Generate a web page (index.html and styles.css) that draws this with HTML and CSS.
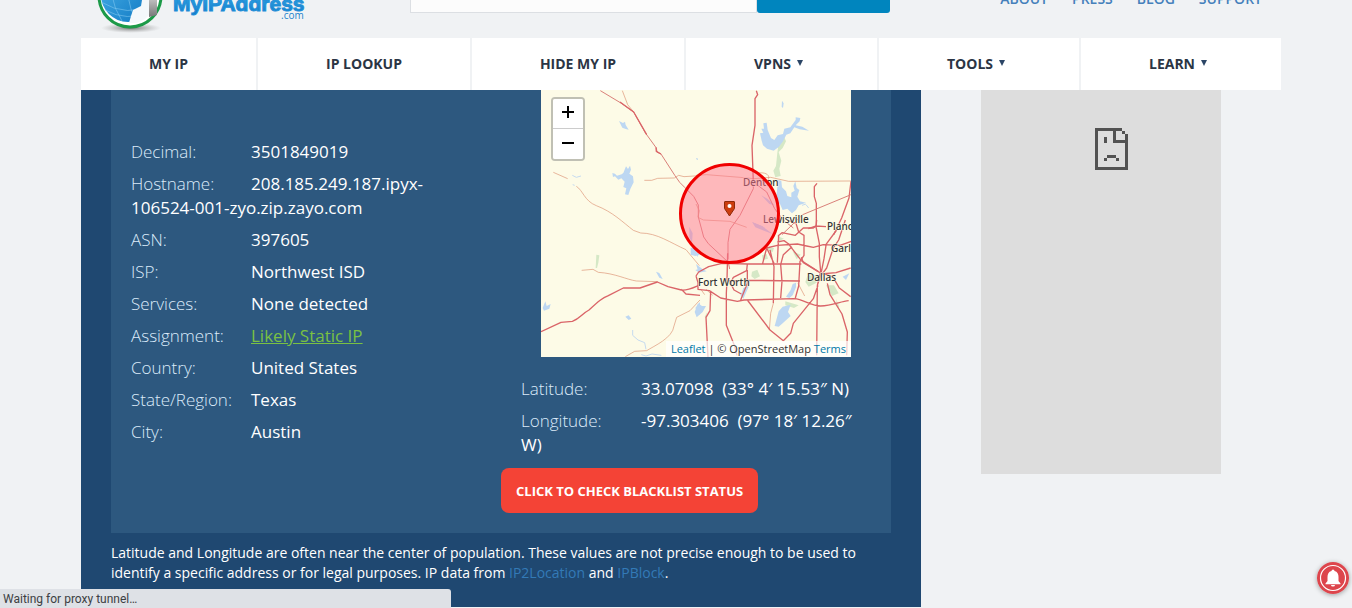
FILE: index.html
```html
<!DOCTYPE html>
<html lang="en">
<head>
<meta charset="utf-8">
<meta name="viewport" content="width=device-width, initial-scale=1">
<title>What Is My IP Address</title>
<link rel="stylesheet" href="styles.css">
</head>
<body>
<div class="page">

<header class="header">
    <a class="logo" href="#">
        <svg width="230" height="78" viewBox="0 0 230 78">
            <defs>
                <radialGradient id="shade"><stop offset="0" stop-color="#555" stop-opacity=".8"/><stop offset="1" stop-color="#999" stop-opacity="0"/></radialGradient>
                <linearGradient id="sea" x1="0" y1="0" x2="1" y2="1"><stop offset="0" stop-color="#4db4ea"/><stop offset="1" stop-color="#0b74c0"/></linearGradient>
                <linearGradient id="steel" x1="0" y1="0" x2="0" y2="1"><stop offset="0" stop-color="#eee"/><stop offset="1" stop-color="#777"/></linearGradient>
                <linearGradient id="word" x1="0" y1="0" x2="0" y2="1"><stop offset="0" stop-color="#36aee8"/><stop offset="1" stop-color="#1478c8"/></linearGradient>
            </defs>
            <ellipse cx="50" cy="68" rx="30" ry="5" fill="url(#shade)"/>
            <circle cx="49" cy="36" r="31" fill="#fff" stroke="#1c9a48" stroke-width="3"/>
            <circle cx="47" cy="35" r="27" fill="url(#sea)"/>
            <path d="M20 42q26 16 54 2M24 50q22 12 45 2M33 9q-8 27 8 52M47 8q-4 30 8 53M62 12q8 20 0 46" fill="none" stroke="#8fd0f4" stroke-width=".5"/>
            <path d="M54 30l7 10-1 6-8 4-2 6-2 7 8 0 8-4 12-12V30z" fill="#f4f8fb"/>
            <path d="M68 28h8v27l-8 2z" fill="url(#steel)"/>
            <text class="logo-name" x="92" y="51">MyIPAddress</text>
            <text class="logo-com" x="200" y="59">.com</text>
        </svg>
    </a>
    <form class="search">
        <input type="text" aria-label="IP address">
        <button type="button" aria-label="Search"></button>
    </form>
    <nav class="top-links">
        <a href="#">ABOUT</a>
        <a href="#">PRESS</a>
        <a href="#">BLOG</a>
        <a href="#">SUPPORT</a>
    </nav>
</header>

<nav class="menu">
    <a href="#">MY IP</a>
    <a href="#">IP LOOKUP</a>
    <a href="#">HIDE MY IP</a>
    <a class="has-menu" href="#">VPNS <span class="arrow"></span></a>
    <a class="has-menu" href="#">TOOLS <span class="arrow"></span></a>
    <a class="has-menu" href="#">LEARN <span class="arrow"></span></a>
</nav>

<div class="content">
    <main class="main">
        <div class="panel">
            <div class="details">
                <p><span class="label">Decimal:</span>3501849019</p>
                <p><span class="label">Hostname:</span>208.185.249.187.ipyx-106524-001-zyo.zip.zayo.com</p>
                <p><span class="label">ASN:</span>397605</p>
                <p><span class="label">ISP:</span>Northwest ISD</p>
                <p><span class="label">Services:</span>None detected</p>
                <p><span class="label">Assignment:</span><a href="#">Likely Static IP</a></p>
                <p><span class="label">Country:</span>United States</p>
                <p><span class="label">State/Region:</span>Texas</p>
                <p><span class="label">City:</span>Austin</p>
            </div>

            <div class="location">
                <div class="map">
                    <svg class="map-tiles" viewBox="0 0 310 267">
                        <g transform="scale(.33333)">
                            <!-- north west -->
                            <g transform="translate(-3 -6)">
                                <path class="water" d="M237 99l12 6 6-4 2 10 9 14-9-2-10-4zM250 255l8-20 6 8 6-10 3 12-5 12 11 8 2 18-10 20-6 18-10-2 4-18-9-4 4-16-10-10-9 4-10-10-6 2-2-12 8 2 6 6 14-4z"/>
                                <path class="stream" d="M97 262l12 6 14-4M98 290l6 2M470 212l4 2"/>
                                <path class="road thin" d="M247 8l16 42 18 22M40 253l43 19M109 295c20 12 24 44 60 58 48 18 80 50 111 74l22 8c50 0 90 30 136 50l40 48M313 277l22 0 18-6 50-1 13-8 16 4 46-3"/>
                                <path class="road mid" d="M181 8l60 36 40 28 36 64 32 44 2 12 12 6 42 65 14 20 16 16 26 26 14 26 0 36 16 60 14 20 60 56 4 20"/>
                                <path class="road" d="M240 42l41 30 39 68M348 178l1 12 14 8"/>
                            </g>
                            <!-- north east -->
                            <g transform="translate(465 -6)">
                                <path class="green" d="M262 140l8 20-10 20-12 12 8 26-6 24 4 22-16 4-6-20 8-14 4-40 2-14-6-16z"/>
                                <path class="water" d="M192 136l10-2-6-12 8 0-2-16 10-2 3 22 10 24 10 6 10-14 16-4 4-16 18-4 16-22 0-8 14 2-2 10-12 12 20 4 20 12-28-4-16-6-12 18-12 4-10 20-12 16-16 12-20-6-12-10-4-14zM258 38l5 8-2 14-4-4zM246 276l10 2 2 20 12 12 4 14 12 4 0-14 10-6-4-14 6-14 4 20 8 6-6 20 8 14 18 4-22 8-8 14-12 10-14-14-14 4-8-18-12-8zM196 322l18 10 22 20-16-4zM170 403l38 16-22-2z"/>
                                <path class="stream" d="M0 212l6 2M318 352l12-4M330 350l8 10"/>
                                <path class="road thin" d="M0 262l32-2 100 8 42 4 50-4 54 12 187-1M0 348l10 20-4 20 16 8 80 4 50 18M180 256c30-6 44 6 36 20"/>
                                <path class="road" d="M181 8l4 12-8 12 0 80-9 60 4 110M363 286l-8 10 0 30 6 20 0 68-24 8M465 280l-6 50-22 60-24 50"/>
                                <path class="road mid" d="M172 282l0 20-40 80-30 42-6 40 0 50M172 282l40 30 24 50 26 34 30 24M465 320l-145 60-62 60"/>
                            </g>
                            <!-- south west -->
                            <g transform="translate(-3 390)">
                                <path class="green" d="M169 104l9 2-3 22-4 16-4 0z"/>
                                <path class="water" d="M348 155l10 4 10 18-10-4zM448 20l10 20-2 30-8-20zM452 84l14-4 4 16 10 8-14 4-14-4zM466 150l14-4v14zM466 264l14-18v40zM8 264l8-20 4 14 12-6-4 14-16 6zM256 290l10-4 8 10-8 4z"/>
                                <path class="stream" d="M278 330l0 16 16 14 20 8 4 20M304 404l14 4 18-6 28 4"/>
                                <path class="road thin" d="M125 151l34-3 16 9c50 3 86 22 114 26l64 2M480 240l-30 32-40 20-8 26c-4 36-60 60-82 74l-36 2-28 16"/>
                                <path class="road" d="M3 335l60-28 34-3c24-8 30-24 50-34 30-28 40-36 58-43l45-23 50 0 52-18 32 14 40 10c20 2 34-6 52-14M424 208l14 14 42 4"/>
                            </g>
                            <!-- south east -->
                            <g transform="translate(465 390)">
                                <path class="green" d="M168 155l16-6 8 20-16 8-10-8zM244 48l20 8-14 6zM214 84l20 0-4 12-14-4zM198 106l14-4 4 14-16 4zM334 168l22-4 6 24-24 12-10-14zM390 196l24 0 14 24-20 8zM420 236l10 24-6 4zM26 290l8-14-4 18zM268 244l40 12-14 8-26-8zM290 94l24 10-12 14z"/>
                                <path class="water" d="M0 100l6 4-2 8zM0 132l20 16 12 6-24 4zM6 250l12 8 12 0-10 18-18 16-6-16zM142 204l18-8-8 18-10 22-8-10zM168 6l30 12 32 24-22-8-30-12zM236 318l12-44 12-14 24-6-8 22 8 12-24 22-12 10zM290 192l10-4 0 14-10 24-10 8-10-4 14-20zM440 170l20-10-10 20z"/>
                                <path class="road thin" d="M232 250l-8 30-4 50M30 208l20 18M16 210l10 14M306 190l20 38"/>
                                <path class="road" d="M95 100l-2 80-2 40 0 96 24 60 8 30M0 168l8-12 30-16 40-10 76 2 162 0M0 168l6 20 0 20 34 4 34 22 50 10 20-4 150-4c30 2 50 22 80 22 34 0 60-14 84-16M44 212l-2 60-12 20 4 80 2 40M92 183l70-2 150 2M154 132l-2 20-40 20-8 18 10 20 22 12M154 150l0 40-20 50M154 240l68 90 40 32 22-22 8-30 60-74 14-40M212 84l22 46M212 84l-12 46M222 90l12 50-2 110M248 46l-4 82M274 0l26 10 8 26 16 10 0 60-12 18-4 74-10 36M212 84l32-8 60-4 28 6 20 4 30-8 50 2 40-14M244 66l20-4 14 10 12 16 26 34 50 32M288 80l-26 24-8 30 4 50-4 50M246 48l12-10 40 8 24-22 30 0 8-6 30 2M362 0l-2 20 10 50 0 40 4 46-10 40-2 210M390 76l-6 40-10 50-10 30"/>
                                <path class="road" d="M448 0l-20 60-16 24-20 60-12 16M422 30l-34 46M380 160l30 10 20 34 34 26M394 190l8 34 36 58 16 54-2 70M374 162l46-4 44-14M316 112l6 16 50 30"/>
                            </g>
                        </g>
                        <text x="202" y="96">Denton</text>
                        <text x="222" y="133">Lewisville</text>
                        <text x="286" y="140">Plano</text>
                        <text x="290" y="162">Garl</text>
                        <text x="157" y="196">Fort Worth</text>
                        <text x="266" y="191">Dallas</text>
                        <circle class="radius" cx="188.5" cy="123.5" r="49"/>
                        <path class="pin" d="M184 111.5h9q.5 0 .5.5v6.500l-5 7.500-5-7.500V112q0-.5.5-.5z"/>
                        <circle cx="188.500" cy="116" r="2" fill="#fff"/>
                    </svg>
                    <div class="zoom">
                        <button type="button" aria-label="Zoom in"><svg width="12" height="12"><path d="M6 0v12M0 6h12"/></svg></button>
                        <button type="button" aria-label="Zoom out"><svg width="12" height="12"><path d="M0 6h12"/></svg></button>
                    </div>
                    <div class="attribution"><a href="#">Leaflet</a> | © OpenStreetMap <a href="#">Terms</a></div>
                </div>
                <div class="coords">
                    <p><span class="label">Latitude:</span>33.07098&nbsp; (33° 4′ 15.53″ N)</p>
                    <p><span class="label">Longitude:</span>-97.303406&nbsp; (97° 18′ 12.26″ W)</p>
                </div>
                <button type="button" class="blacklist">CLICK TO CHECK BLACKLIST STATUS</button>
            </div>
        </div>
        <p class="note">Latitude and Longitude are often near the center of population. These values are not precise enough to be used to identify a specific address or for legal purposes. IP data from <a href="#">IP2Location</a> and <a href="#">IPBlock</a>.</p>
    </main>

    <aside class="ad">
        <svg width="33" height="42" viewBox="0 0 11 14" shape-rendering="crispEdges">
            <path fill="#525252" d="M0 0h9v1H7v3h3V2h1v12H0zM1 1v12h9V5H6V1zM9 1h1v1H9zM3 3h1v2H3zM4 9h3v1H4zM3 10h1v1H3zM7 10h1v1H7z" fill-rule="evenodd"/>
        </svg>
    </aside>
</div>

</div>

<button type="button" class="bell" aria-label="Notifications">
    <svg width="32" height="32" viewBox="0 0 32 32">
        <circle cx="16" cy="16" r="16" fill="#dd454c"/>
        <circle cx="16" cy="16" r="12.500" fill="none" stroke="#fff" stroke-width="1.200"/>
        <path fill="#fff" d="M16 7.500a1.500 1.500 0 0 1 1.500 1.500c3 .8 4 3 4 6v4l2 2.500v.8h-15v-.8l2-2.500v-4c0-3 1-5.200 4-6A1.500 1.500 0 0 1 16 7.500zM14 23h4a2 1.500 0 0 1-4 0z"/>
    </svg>
</button>
<div class="status">Waiting for proxy tunnel…</div>
</body>
</html>
```
FILE: styles.css
```css
* {
    box-sizing: border-box;
}
body {
    margin: 0;
    padding-left: 10px;
    background-color: #f0f2f4;
    color: #fff;
    font-family: "Open Sans", sans-serif;
    overflow: hidden;
}
a {
    text-decoration: none;
}
p {
    margin: 0;
}
button {
    border: none;
    padding: 0;
    font-family: inherit;
    cursor: pointer;
}

/* the top of the header sits above the window */
.page {
    max-width: 1200px;
    margin: -40px auto 0;
}
.header {
    display: flex;
    align-items: flex-start;
    height: 78px;
}
.logo {
    flex: 0 0 329px;
}
.logo svg {
    display: block;
}
.logo-name {
    font: bold 21px "Liberation Sans", sans-serif;
    fill: url(#word);
    stroke: #1f8fd8;
    stroke-width: 1px;
}
.logo-com {
    font: 10px "Open Sans", sans-serif;
    fill: #1b82cc;
}
.search {
    display: flex;
    flex: 0 0 480px;
    height: 40px;
    margin-top: 13px;
}
.search input {
    flex: 1;
    min-width: 0;
    border: 1px solid #dcdfe3;
    background-color: #fcfcfc;
}
.search button {
    width: 133px;
    border-radius: 3px;
    background-color: #0085be;
}
.top-links {
    display: flex;
    gap: 24px;
    margin-left: auto;
    padding: 30px 19px 0 0;
}
.top-links a {
    color: #4580bb;
    font-size: 14px;
    font-weight: 600;
    line-height: 18px;
}

.menu {
    display: grid;
    grid-template-columns: 175fr 212fr 212fr 191fr 200fr 200fr;
    gap: 2px;
}
.menu a {
    display: flex;
    align-items: center;
    justify-content: center;
    gap: 6px;
    height: 52px;
    padding-bottom: 2px;
    background-color: #fff;
    color: #2b3544;
    font-size: 14px;
    font-weight: 700;
}
.menu .has-menu {
    padding-right: 6px;
}
.arrow {
    border: 3px solid transparent;
    border-top: 6px solid #2b4566;
    border-bottom: none;
}

.content {
    display: flex;
    align-items: flex-start;
    gap: 60px;
}
.main {
    flex: 0 0 70%;
    padding: 0 30px 24px;
    background-color: #1f4871;
}
.panel {
    display: grid;
    grid-template-columns: 1fr 1fr;
    padding-bottom: 20px;
    background-color: #2d587f;
    font-size: 17px;
    line-height: 24px;
}
.details {
    padding: 50px 20px 0;
}
.panel p {
    margin-bottom: 8px;
}
.label {
    display: inline-block;
    width: 120px;
    font-weight: 300;
    color: #dcebfa;
}
.details a {
    color: #7ac143;
    text-decoration: underline;
}
.coords {
    padding: 20px 20px 3px;
}
.map {
    position: relative;
    margin: 0 40px;
    overflow: hidden;
    background-color: #fdfbe7;
}
.map-tiles {
    display: block;
    width: 100%;
}
.map-tiles text {
    font: 500 10px "Noto Sans", sans-serif;
    fill: #333;
    stroke: #fdfbe7;
    stroke-width: 1px;
    paint-order: stroke;
}
.water {
    fill: #bdd7f2;
}
.green {
    fill: #d5e8c6;
}
.stream {
    fill: none;
    stroke: #c5daef;
    stroke-width: 3;
}
.road {
    fill: none;
    stroke: #da6468;
    stroke-width: 4;
    stroke-linejoin: round;
}
.road.mid {
    stroke-width: 3;
    stroke: #d98078;
}
.road.thin {
    stroke-width: 2;
    stroke: #dc9274;
}
.radius {
    fill: #ff7590;
    fill-opacity: .5;
    stroke: #f00000;
    stroke-width: 3;
}
.pin {
    fill: #cc3d0e;
    stroke: #8e2a0a;
    stroke-width: 1;
}
.zoom {
    position: absolute;
    top: 7px;
    left: 10px;
    border: 2px solid #c0c0b4;
    border-radius: 4px;
    overflow: hidden;
}
.zoom button {
    display: flex;
    align-items: center;
    justify-content: center;
    width: 30px;
    height: 30px;
    padding-bottom: 3px;
    background-color: #fff;
}
.zoom button:first-child {
    border-bottom: 1px solid #ccc;
}
.zoom path {
    stroke: #000;
    stroke-width: 2;
}
.attribution {
    position: absolute;
    right: 0;
    bottom: 0;
    padding: 0 5px;
    background-color: rgba(255, 255, 255, .7);
    color: #333;
    font-size: 11px;
    line-height: 16px;
    white-space: nowrap;
}
.attribution a {
    color: #0078a8;
}
.blacklist {
    height: 45px;
    padding: 0 15px;
    border-radius: 8px;
    background-color: #f44336;
    color: #fff;
    font-size: 13px;
    font-weight: 700;
}
.note {
    padding-top: 10px;
    font-size: 14px;
    line-height: 20px;
}
.note a {
    color: #337ab7;
}

.ad {
    display: flex;
    justify-content: center;
    flex: 0 0 20%;
    height: 384px;
    padding: 38px 0 0 21px;
    background-color: #ddd;
}

.bell {
    position: fixed;
    right: 3px;
    bottom: 14px;
    width: 32px;
    height: 32px;
    border-radius: 50%;
    background: none;
    box-shadow: 0 1px 5px rgba(0, 0, 0, .35);
}
.bell svg {
    display: block;
}
.status {
    position: fixed;
    left: 0;
    bottom: 0;
    width: 33.333%;
    height: 19px;
    padding-left: 3px;
    border-radius: 0 3px 0 0;
    background-color: #dee1e6;
    color: #3c4043;
    font: 12px/20px Roboto, sans-serif;
}
```
